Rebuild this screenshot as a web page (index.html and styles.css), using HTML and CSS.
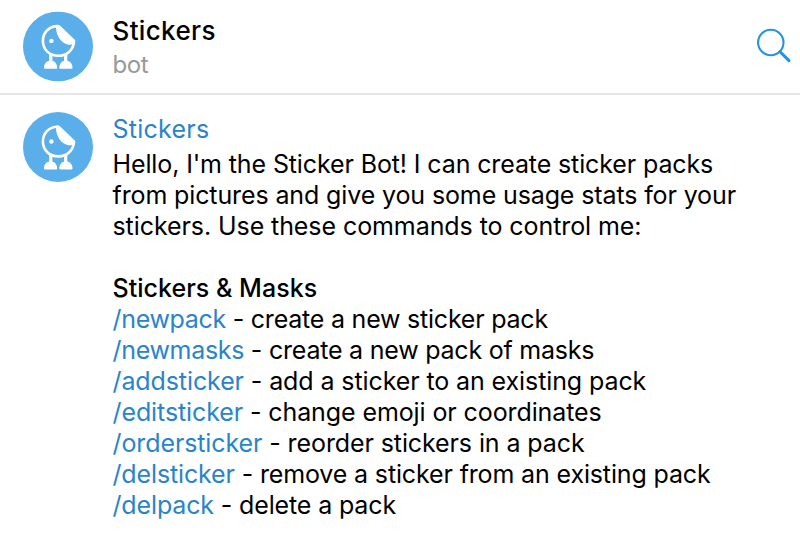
FILE: index.html
```html
<!DOCTYPE html>
<html lang="en">
<head>
<meta charset="utf-8">
<title>Stickers</title>
<link rel="stylesheet" href="styles.css">
</head>
<body>
<svg width="0" height="0" class="defs" aria-hidden="true">
  <symbol id="duck" viewBox="0 0 70 70">
    <circle cx="35" cy="35" r="35" fill="#5aaeea"/>
    <path d="M34.4 14.7C25.8 14.7 19.9 21.5 19.9 29.5C19.9 38.2 26.6 44.4 35.3 44.4C44.2 44.4 50.5 38.3 51 30" fill="none" stroke="#fff" stroke-width="2.6"/>
    <path d="M33 13.9Q35.4 12.6 37.2 14.4L51.8 28.4Q53 29.8 51.8 31.2C50 34.2 44.6 33.8 40.2 31C35 27.4 32.6 20 33 13.9Z" fill="#fff"/>
    <circle cx="28.4" cy="29.5" r="2.2" fill="#fff"/>
    <path d="M27.8 43V51M42.7 43V51" stroke="#fff" stroke-width="3.2"/>
    <path d="M21 56.6C21 52 23.4 49.4 27.6 49.4S34.2 52 34.2 56.6Q34.2 57.4 33.4 57.4H21.8Q21 57.4 21 56.6ZM36.3 56.6C36.3 52 38.7 49.4 42.9 49.4S49.5 52 49.5 56.6Q49.5 57.4 48.7 57.4H37.1Q36.3 57.4 36.3 56.6Z" fill="#fff"/>
  </symbol>
</svg>
<header class="header">
  <svg class="avatar" viewBox="0 -.4 70 70"><use href="#duck" width="70" height="70"/></svg>
  <div class="peer"><h1 class="title">Stickers</h1><p class="status">bot</p></div>
  <svg class="search" viewBox="0 0 36 36"><circle cx="14.8" cy="14.5" r="12.7"/><path class="handle" d="M24 23.7L33 32.6"/></svg>
</header>
<main class="message">
  <svg class="avatar"><use href="#duck"/></svg>
  <div class="body">
    <div class="sender">Stickers</div>
    <p class="text">Hello, I'm the Sticker Bot! I can create sticker packs<br>from pictures and give you some usage stats for your<br><span class="closing">stickers. Use these commands to control me:</span></p>
    <h2 class="heading">Stickers &amp; Masks</h2>
    <ul class="commands">
      <li class="tight"><a>/newpack</a> - create a new sticker pack</li>
      <li class="tight"><a>/newmasks</a> - create a new pack of masks</li>
      <li><a>/addsticker</a> - add a sticker to an existing pack</li>
      <li><a>/editsticker</a> - change emoji or coordinates</li>
      <li><a>/ordersticker</a> - reorder stickers in a pack</li>
      <li class="snug"><a>/delsticker</a> - remove a sticker from an existing pack</li>
      <li class="snug"><a>/delpack</a> - delete a pack</li>
    </ul>
  </div>
</main>
</body>
</html>
```
FILE: styles.css
```css
* { box-sizing: border-box; margin: 0; padding: 0; }
body { background: #fff; color: #000; font: 25px/31px Inter, sans-serif; height: 548px; overflow: hidden; }
.defs { display: block; }
.header { display: flex; height: 95px; padding: 11px 8px 0 23px; border-bottom: 2px solid #e5e5e5; }
.avatar { width: 70px; height: 70px; flex: none; overflow: visible; }
.peer { flex: 1; padding: 4px 0 0 19.5px; }
.title { font-size: 26px; font-weight: 500; line-height: 32px; letter-spacing: .35px; }
.status { color: #999; font-size: 24px; line-height: 35px; letter-spacing: -.4px; }
.search { width: 36px; height: 36px; margin-top: 17px; fill: none; stroke: #2592e2; stroke-width: 2.1; }
.handle { stroke-width: 3; stroke-linecap: round; }
.message { display: flex; padding: 17px 23px; }
.body { padding-left: 19.5px; white-space: nowrap; }
.sender { color: #2a84c9; line-height: 34px; letter-spacing: .25px; }
.text { margin-top: 3px; letter-spacing: -.12px; }
.closing { letter-spacing: -.08px; }
.heading { font-size: 25px; font-weight: 500; margin-top: 31px; letter-spacing: .03px; }
.commands { list-style: none; letter-spacing: -.1px; }
.commands a { color: #2a84c9; }
.snug { letter-spacing: -.14px; }
.tight { letter-spacing: -.22px; }
.tight a { letter-spacing: -.32px; }
```
